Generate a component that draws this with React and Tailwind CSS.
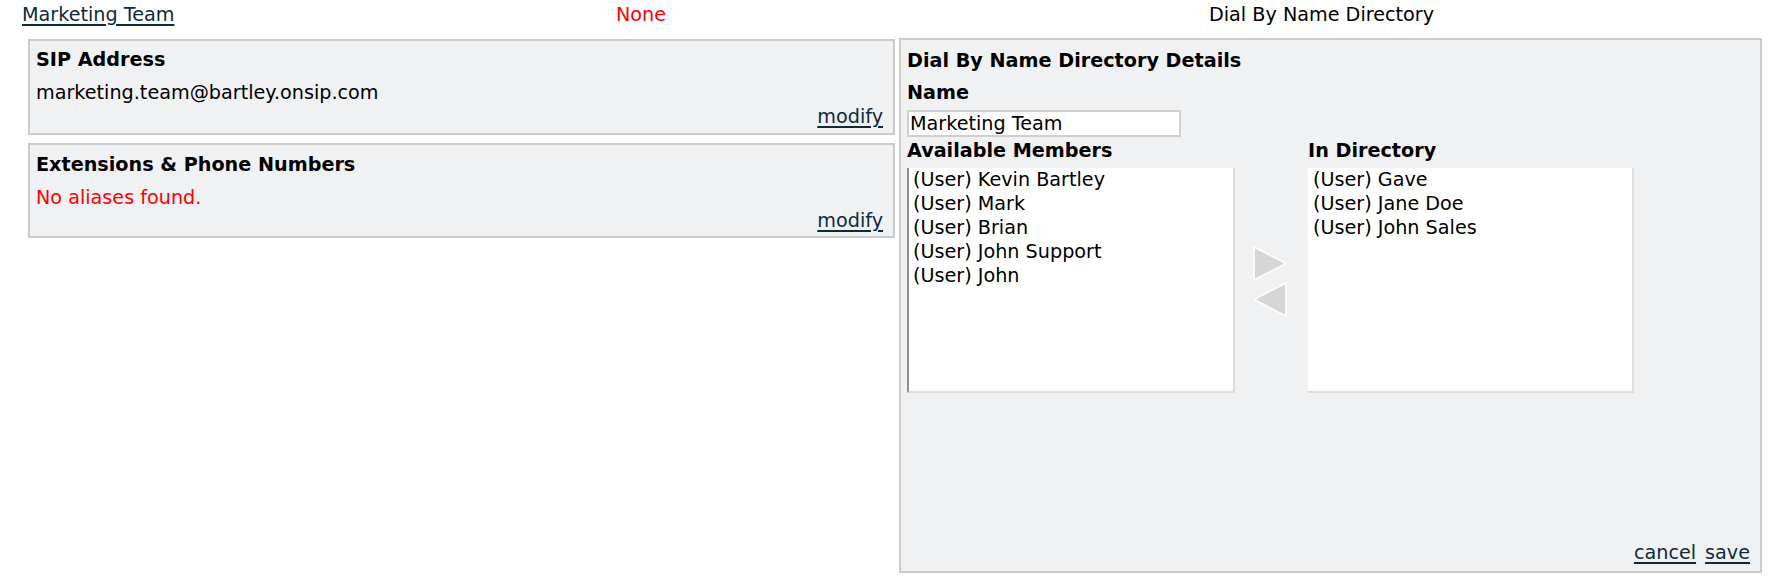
import React from "react";

function Tri({ dir }) {
  return (
    <svg width="34" height="35" viewBox="0 0 34 35" className="block">
      {dir === "right" ? (
        <polygon points="1,1 33,17.5 1,34" fill="#d6d6d6" stroke="#ffffff" strokeWidth="1.5" />
      ) : (
        <polygon points="33,1 1,17.5 33,34" fill="#d6d6d6" stroke="#ffffff" strokeWidth="1.5" />
      )}
    </svg>
  );
}

const available = [
  "(User) Kevin Bartley",
  "(User) Mark",
  "(User) Brian",
  "(User) John Support",
  "(User) John",
];
const inDir = ["(User) Gave", "(User) Jane Doe", "(User) John Sales"];

export default function App() {
  return (
    <div
      className="w-[1792px] h-[580px] bg-white text-black text-[19.2px] leading-[24px]"
      style={{ fontFamily: '"DejaVu Sans", Verdana, sans-serif' }}
    >
      {/* top row */}
      <div className="flex pt-[3px]">
        <div className="w-[616px] pl-[22px]">
          <a className="text-[#0e2a3c] underline decoration-2 underline-offset-[3px] cursor-pointer">Marketing Team</a>
        </div>
        <div className="w-[593px] text-[#ff0000]">None</div>
        <div className="flex-1">Dial By Name Directory</div>
      </div>

      <div className="flex items-start mt-[11px] pl-[28px] gap-[4px]">
        {/* left column */}
        <div className="w-[867px] mt-[1px] flex flex-col gap-[8px]">
          <div className="border-2 border-[#cbcbcb] bg-[#f0f1f3] pt-[7px] pb-[4px] pl-[6px] pr-[10px]">
            <div className="font-bold mb-[9px]">SIP Address</div>
            <div>marketing.team@bartley.onsip.com</div>
            <div className="text-right mt-[0px]">
              <a className="text-[#0e2a3c] underline decoration-2 underline-offset-[3px] cursor-pointer">modify</a>
            </div>
          </div>
          <div className="border-2 border-[#cbcbcb] bg-[#f0f1f3] pt-[8px] pb-[3px] pl-[6px] pr-[10px]">
            <div className="font-bold mb-[9px]">Extensions &amp; Phone Numbers</div>
            <div className="text-[#ff0000]">No aliases found.</div>
            <div className="text-right mt-[-1px]">
              <a className="text-[#0e2a3c] underline decoration-2 underline-offset-[3px] cursor-pointer">modify</a>
            </div>
          </div>
        </div>

        {/* right panel */}
        <div className="w-[863px] h-[535px] border-2 border-[#cbcbcb] bg-[#f0f1f3] pt-[9px] pb-[6px] pl-[6px] pr-[10px] flex flex-col">
          <div className="font-bold">Dial By Name Directory Details</div>
          <div className="font-bold mt-[8px]">Name</div>
          <div className="mt-[5px] w-[274px] h-[27px] border-2 border-[#cfcfcf] bg-white px-[1px] leading-[23px] overflow-hidden whitespace-nowrap">
            Marketing Team
          </div>
          <div className="flex mt-[2px]">
            <div className="w-[328px] flex flex-col">
              <div className="font-bold">Available Members</div>
              <div className="mt-[5px] h-[225px] bg-white border-l-2 border-l-[#8c8c8c] border-r-2 border-r-[#dcdcdc] border-b-2 border-b-[#dcdcdc] pl-[4px]">
                {available.map((m) => (
                  <div key={m}>{m}</div>
                ))}
              </div>
            </div>
            <div className="w-[73px] flex flex-col">
              <div className="h-[29px]" />
              <div className="h-[225px] flex flex-col items-center justify-center gap-[1px] pt-[2px]">
                <div className="-ml-[4px]"><Tri dir="right" /></div>
                <div className="-ml-[4px]"><Tri dir="left" /></div>
              </div>
            </div>
            <div className="w-[326px] flex flex-col">
              <div className="font-bold">In Directory</div>
              <div className="mt-[5px] h-[225px] bg-white border-r-2 border-r-[#dcdcdc] border-b-2 border-b-[#dcdcdc] pl-[5px]">
                {inDir.map((m) => (
                  <div key={m}>{m}</div>
                ))}
              </div>
            </div>
          </div>
          <div className="mt-auto flex justify-end gap-[9px]">
            <a className="text-[#0e2a3c] underline decoration-2 underline-offset-[3px] cursor-pointer">cancel</a>
            <a className="text-[#0e2a3c] underline decoration-2 underline-offset-[3px] cursor-pointer">save</a>
          </div>
        </div>
      </div>
    </div>
  );
}
